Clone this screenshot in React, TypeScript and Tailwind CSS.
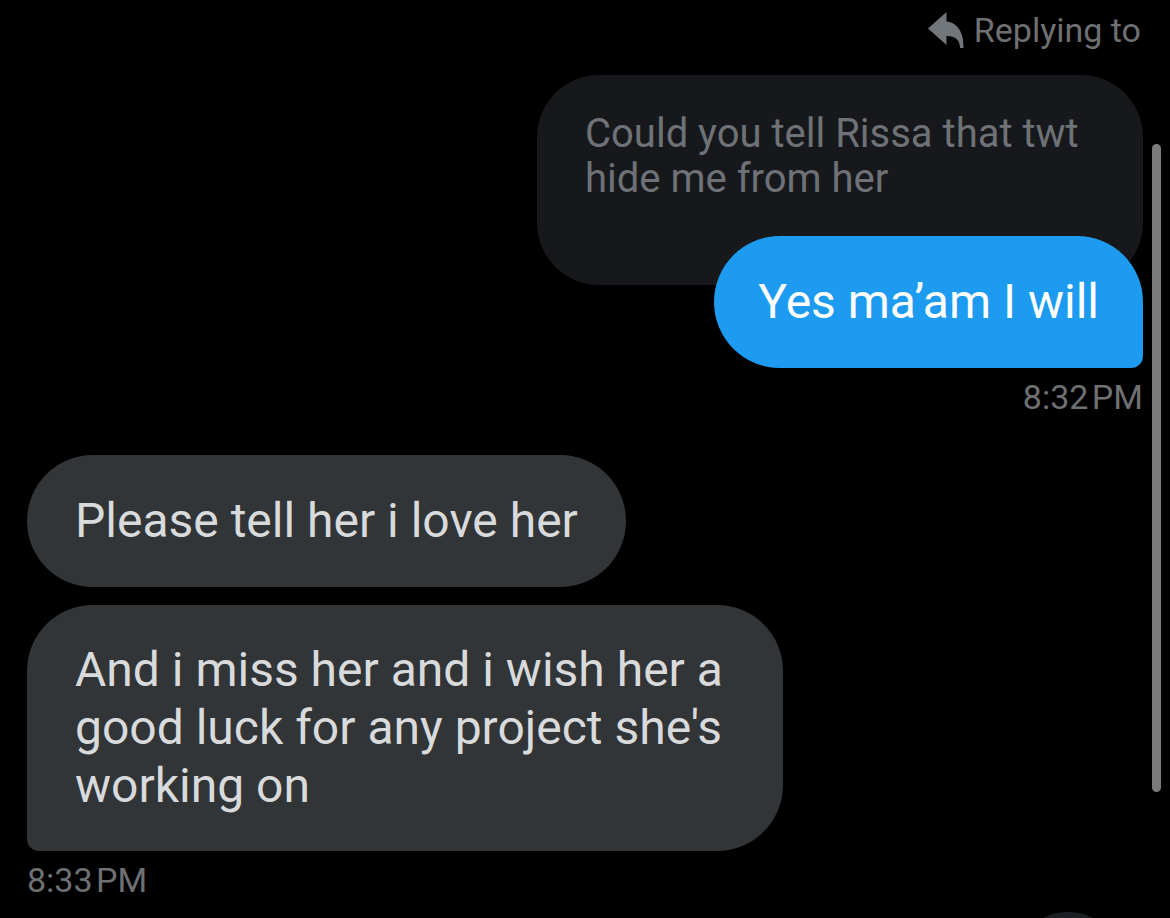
import type { ReactNode } from "react";

type Side = "in" | "out";

function Bubble({ side, tail, children }: { side: Side; tail?: boolean; children: ReactNode }) {
  const color =
    side === "out"
      ? "self-end bg-[#1d9bf0] px-11 text-white"
      : "self-start bg-[#323537] px-12 text-[#d9dadc]";
  const corner = !tail ? "" : side === "out" ? "rounded-br-[12px]" : "rounded-bl-[12px]";
  return (
    <div
      className={`flex min-h-[132px] max-w-[756px] items-center rounded-[66px] py-9 text-[48px] leading-[58px] ${color} ${corner}`}
    >
      <p>{children}</p>
    </div>
  );
}

function Time({ side, children }: { side: Side; children: ReactNode }) {
  return (
    <time
      className={`mt-2 text-[34px] leading-[42px] text-[#6e7072] ${side === "out" ? "self-end" : "self-start"}`}
    >
      {children}
    </time>
  );
}

export default function App() {
  return (
    <main className="relative flex min-h-screen flex-col overflow-hidden bg-black px-[27px] pt-2.5 font-['Roboto',sans-serif]">
      <div className="flex items-center gap-2.5 self-end pr-0.5 text-[34px] leading-10 text-[#6e7072]">
        <svg viewBox="0 0 36 36" className="size-9 fill-[#71767b]" aria-hidden="true">
          <path d="M0 16.500 18.500 0v9.500C28.500 10.500 36 19 35.500 36H32C32 28 27.500 24 18.500 24v9z" />
        </svg>
        <span>Replying to</span>
      </div>

      <blockquote className="mt-[25px] min-h-[210px] w-[606px] max-w-full self-end rounded-[62px] bg-[#17181c] px-12 pt-9 text-[40px] leading-[45px] text-[#6e7276]">
        Could you tell Rissa that twt hide me from her
      </blockquote>
      <div className="relative -mt-[49px] flex flex-col">
        <Bubble side="out" tail>
          Yes ma’am I will
        </Bubble>
        <Time side="out">8:32{"\u200a"}PM</Time>
      </div>

      <div className="mt-[37px] flex flex-col">
        <Bubble side="in">Please tell her i love her</Bubble>
        <div className="mt-[18px] flex flex-col">
          <Bubble side="in" tail>
            And i miss her and i wish her a good luck for any project she's working on
          </Bubble>
          <Time side="in">8:33{"\u200a"}PM</Time>
        </div>
      </div>

      <div className="absolute top-36 right-[9px] h-[648px] w-[9px] rounded-full bg-[#7b7b7b]" />
      <button
        type="button"
        aria-label="Scroll to latest"
        className="absolute -bottom-[104px] right-[47px] size-[110px] rounded-full bg-[#1b1e22]"
      />
    </main>
  );
}
